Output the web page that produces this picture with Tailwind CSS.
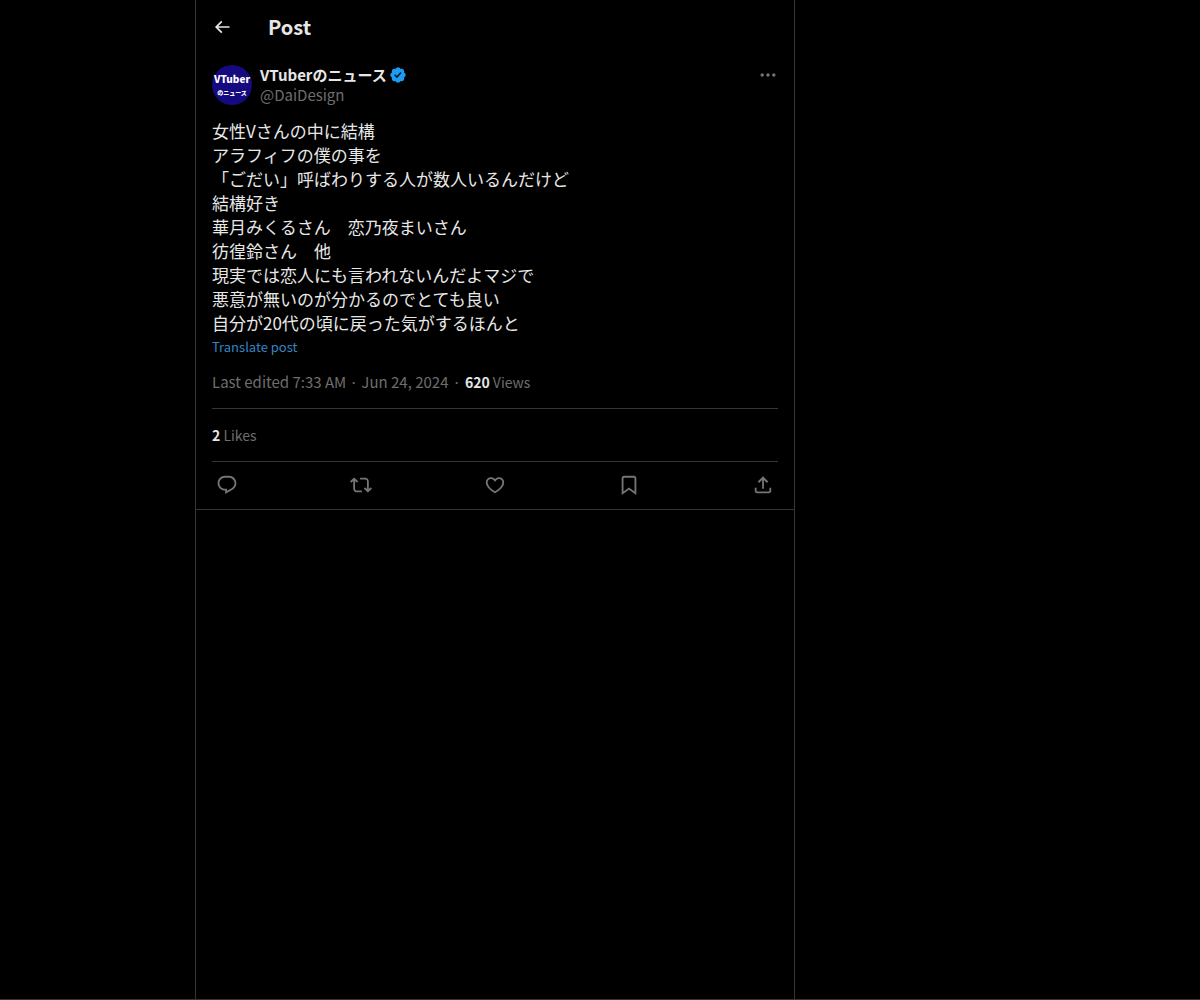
<!DOCTYPE html>
<html lang="ja">
<head>
  <meta charset="UTF-8">
  <meta name="viewport" content="width=device-width, initial-scale=1">
  <title>Post</title>
  <script src="https://cdn.jsdelivr.net/npm/@tailwindcss/browser@4"></script>
</head>
<body class="bg-black text-[#e7e7e7] font-['Noto_Sans_CJK_JP',sans-serif]">
  <div class="min-h-screen flex border-b border-[#383535]">
    <div class="w-[195px] shrink"></div>

    <!-- Timeline column -->
    <main class="w-full max-w-[600px] border-x border-[#363636]">
      <header class="h-[53px] px-4 flex items-center">
        <div class="w-14">
          <button type="button" aria-label="Back" class="block -ml-2 p-2">
            <svg viewBox="0 0 24 24" class="size-5 fill-current"><path d="M7.414 13l5.043 5.04-1.414 1.42L3.586 12l7.457-7.46 1.414 1.42L7.414 11H21v2H7.414z"/></svg>
          </button>
        </div>
        <h1 class="text-xl leading-6 font-bold">Post</h1>
      </header>

      <article class="border-b border-[#363636]">
        <div class="px-4 pt-3">
          <!-- Author -->
          <div class="flex gap-2">
            <a href="#" class="size-10 shrink-0 rounded-full bg-[#150a80] text-white font-black flex flex-col items-center justify-center">
              <span class="text-[10px] leading-4">VTuber</span>
              <span class="text-[6px] leading-3">のニュース</span>
            </a>
            <div class="grow text-[15px] leading-5">
              <div class="flex items-center gap-0.5">
                <a href="#" class="font-bold">VTuberのニュース</a>
                <svg viewBox="0 0 22 22" class="size-[18px]" role="img" aria-label="Verified account"><path fill="#1d9bf0" d="M20.396 11c-.018-.646-.215-1.275-.57-1.816-.354-.54-.852-.972-1.438-1.246.223-.607.27-1.264.14-1.897-.131-.634-.437-1.218-.882-1.687-.47-.445-1.053-.75-1.687-.882-.633-.13-1.29-.083-1.897.14-.273-.587-.704-1.086-1.245-1.44S11.647 1.62 11 1.604c-.646.017-1.273.213-1.813.568s-.969.854-1.24 1.44c-.608-.223-1.267-.272-1.902-.14-.635.13-1.22.436-1.69.882-.445.47-.749 1.055-.878 1.688-.13.633-.08 1.29.144 1.896-.587.274-1.087.705-1.443 1.245-.356.54-.555 1.17-.574 1.817.02.647.218 1.276.574 1.817.356.54.856.972 1.443 1.245-.224.606-.274 1.263-.144 1.896.13.634.433 1.218.877 1.688.47.443 1.054.747 1.687.878.633.132 1.29.084 1.897-.136.274.586.705 1.084 1.246 1.439.54.354 1.17.551 1.816.569.647-.016 1.276-.213 1.817-.567s.972-.854 1.245-1.44c.604.239 1.266.296 1.903.164.636-.132 1.22-.447 1.68-.907.46-.46.776-1.044.908-1.681s.075-1.299-.165-1.903c.586-.274 1.084-.705 1.439-1.246.354-.54.551-1.17.569-1.816z"/><path fill="#04121d" d="M9.662 14.85l-3.429-3.428 1.293-1.302 2.072 2.072 4.4-4.794 1.347 1.246z"/></svg>
              </div>
              <a href="#" class="block text-[#6e6e6e]">@DaiDesign</a>
            </div>
            <button type="button" aria-label="More" class="h-5 text-[#757575]">
              <svg viewBox="0 0 24 24" class="size-5 fill-current"><path d="M3 12c0-1.1.9-2 2-2s2 .9 2 2-.9 2-2 2-2-.9-2-2zm9 2c1.1 0 2-.9 2-2s-.9-2-2-2-2 .9-2 2 .9 2 2 2zm7 0c1.1 0 2-.9 2-2s-.9-2-2-2-2 .9-2 2 .9 2 2 2z"/></svg>
            </button>
          </div>

          <!-- Text -->
          <p class="mt-[14px] text-[17px] leading-6">女性Vさんの中に結構<br>アラフィフの僕の事を<br>「ごだい」呼ばわりする人が数人いるんだけど<br>結構好き<br>華月みくるさん　恋乃夜まいさん<br>彷徨鈴さん　他<br>現実では恋人にも言われないんだよマジで<br>悪意が無いのが分かるのでとても良い<br>自分が20代の頃に戻った気がするほんと</p>
          <button type="button" class="mt-1 block text-[13px] leading-4 text-[#3485c4]">Translate post</button>

          <div class="mt-[17px] mb-4 flex text-[15px] leading-5 text-[#6e6e6e]">
            <a href="#">Last edited 7:33 AM · Jun 24, 2024</a>
            <span class="px-1">·</span>
            <span class="text-sm leading-5"><b class="text-[#e7e7e7]">620</b> Views</span>
          </div>

          <div class="border-y border-[#363636] py-4 text-sm leading-5 text-[#6e6e6e]">
            <a href="#"><b class="text-[#e7e7e7]">2</b> Likes</a>
          </div>

          <!-- Actions -->
          <div class="h-[47px] pb-px flex items-center justify-between text-[#757575]">
            <button type="button" aria-label="Reply" class="px-1">
              <svg viewBox="0 0 24 24" class="size-[22px] fill-current"><path d="M1.751 10c0-4.42 3.584-8 8.005-8h4.366c4.49 0 8.129 3.64 8.129 8.13 0 2.96-1.607 5.68-4.196 7.11l-8.054 4.46v-3.69h-.067c-4.49.1-8.183-3.51-8.183-8.01zm8.005-6c-3.317 0-6.005 2.69-6.005 6 0 3.37 2.77 6.08 6.138 6.01l.351-.01h1.761v2.3l5.087-2.81c1.951-1.08 3.163-3.13 3.163-5.36 0-3.39-2.744-6.13-6.129-6.13H9.756z"/></svg>
            </button>
            <button type="button" aria-label="Repost" class="px-1">
              <svg viewBox="0 0 24 24" class="size-[22px] fill-current"><path d="M4.5 3.88l4.432 4.14-1.364 1.46L5.5 7.55V16c0 1.1.896 2 2 2H13v2H7.5c-2.209 0-4-1.79-4-4V7.55L1.432 9.48.068 8.02 4.5 3.88zM16.5 6H11V4h5.5c2.209 0 4 1.79 4 4v8.45l2.068-1.93 1.364 1.46-4.432 4.14-4.432-4.14 1.364-1.46 2.068 1.93V8c0-1.1-.896-2-2-2z"/></svg>
            </button>
            <button type="button" aria-label="Like" class="px-1">
              <svg viewBox="0 0 24 24" class="size-[22px] fill-current"><path d="M16.697 5.5c-1.222-.06-2.679.51-3.89 2.16l-.805 1.09-.806-1.09C9.984 6.01 8.526 5.44 7.304 5.5c-1.243.07-2.349.78-2.91 1.91-.552 1.12-.633 2.78.479 4.82 1.074 1.97 3.257 4.27 7.129 6.61 3.87-2.34 6.052-4.64 7.126-6.61 1.111-2.04 1.03-3.7.477-4.82-.561-1.13-1.666-1.84-2.908-1.91zm4.187 7.69c-1.351 2.48-4.001 5.12-8.379 7.67l-.503.3-.504-.3c-4.379-2.55-7.029-5.19-8.382-7.67-1.36-2.5-1.41-4.86-.514-6.67.887-1.79 2.647-2.91 4.601-3.01 1.651-.09 3.368.56 4.798 2.01 1.429-1.45 3.146-2.1 4.796-2.01 1.954.1 3.714 1.22 4.601 3.01.896 1.81.846 4.17-.514 6.67z"/></svg>
            </button>
            <button type="button" aria-label="Bookmark" class="px-1">
              <svg viewBox="0 0 24 24" class="size-[22px] fill-current"><path d="M4 4.5C4 3.12 5.119 2 6.5 2h11C18.881 2 20 3.12 20 4.5v18.44l-8-5.71-8 5.71V4.5zM6.5 4c-.276 0-.5.22-.5.5v14.56l6-4.29 6 4.29V4.5c0-.28-.224-.5-.5-.5h-11z"/></svg>
            </button>
            <button type="button" aria-label="Share" class="px-1">
              <svg viewBox="0 0 24 24" class="size-[22px] fill-current"><path d="M12 2.59l5.7 5.7-1.41 1.42L13 6.41V16h-2V6.41l-3.3 3.3-1.41-1.42L12 2.59zM21 15l-.02 3.51c0 1.38-1.12 2.49-2.5 2.49H5.5C4.11 21 3 19.88 3 18.5V15h2v3.5c0 .28.22.5.5.5h12.98c.28 0 .5-.22.5-.5L19 15h2z"/></svg>
            </button>
          </div>
        </div>
      </article>
    </main>
  </div>
</body>
</html>
